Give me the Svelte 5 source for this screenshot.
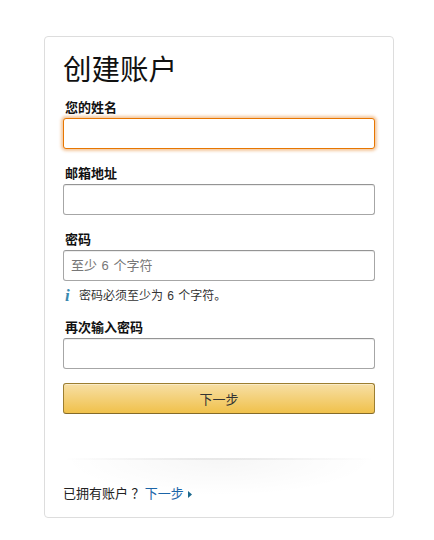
<script>
  let fields = [
    { id: 'name', label: '您的姓名', focus: true },
    { id: 'email', label: '邮箱地址' },
    { id: 'pw', label: '密码', placeholder: '至少 6 个字符', hint: '密码必须至少为 6 个字符。' },
    { id: 'pw2', label: '再次输入密码' }
  ];
</script>

<main class="page">
  <section class="card">
    <h1>创建账户</h1>
    <form>
      {#each fields as f}
        <div class="field" class:has-hint={f.hint}>
          <label for={f.id}>{f.label}</label>
          <input id={f.id} class:focus={f.focus} type="text" placeholder={f.placeholder ?? ''} />
          {#if f.hint}
            <p class="hint"><i>i</i><span>{f.hint}</span></p>
          {/if}
        </div>
      {/each}
      <button type="button">下一步</button>
    </form>
    <div class="foot">
      已拥有账户 ？<a href="#signin">下一步<svg width="4" height="7" viewBox="0 0 4 7"><path d="M0 0l4 3.5L0 7z" fill="#1d6a8e" /></svg></a>
    </div>
  </section>
</main>

<style>
  :global(body) {
    margin: 0;
    background: #fff;
    font-family: "Liberation Sans", "Noto Sans CJK SC", sans-serif;
    color: #111;
  }
  .page {
    padding: 36px 40px 22px 44px;
  }
  .card {
    box-sizing: border-box;
    width: 350px;
    height: 482px;
    border: 1px solid #ddd;
    border-radius: 4px;
    padding: 14px 18px 0;
    display: flex;
    flex-direction: column;
  }
  h1 {
    margin: 0 0 9px;
    font-size: 28.5px;
    font-weight: 400;
    line-height: 38px;
  }
  form {
    display: flex;
    flex-direction: column;
  }
  .field {
    margin-bottom: 15px;
  }
  .field.has-hint {
    margin-bottom: 13px;
  }
  .field:last-of-type {
    margin-bottom: 14px;
  }
  label {
    display: block;
    padding-left: 2px;
    font-size: 13px;
    font-weight: 700;
    line-height: 19px;
    margin-bottom: 1px;
  }
  input {
    display: block;
    box-sizing: border-box;
    width: 312px;
    height: 31px;
    padding: 0 7px;
    border: 1px solid #a6a6a6;
    border-top-color: #949494;
    border-radius: 3px;
    box-shadow: inset 0 1px 0 rgba(0, 0, 0, 0.07);
    font: inherit;
    font-size: 13px;
    word-spacing: 1px;
    outline: none;
  }
  input.focus {
    border-color: #e77600;
    box-shadow: 0 0 3px 2px rgba(228, 121, 17, 0.4);
  }
  input::placeholder {
    color: #777;
  }
  .hint {
    display: flex;
    align-items: center;
    margin: 6px 0 0;
    font-size: 12px;
    line-height: 18px;
    word-spacing: 1px;
    color: #333;
  }
  .hint i {
    width: 16px;
    padding-left: 2px;
    box-sizing: border-box;
    font-family: "Liberation Serif", serif;
    font-size: 17px;
    font-weight: 700;
    color: #3b8ab0;
  }
  button {
    height: 31px;
    width: 312px;
    border: 1px solid #9c7e31;
    border-bottom-color: #846a29;
    border-radius: 3px;
    background: linear-gradient(to bottom, #f7dfa5, #f0c14b);
    box-shadow: inset 0 1px 0 rgba(255, 255, 255, 0.4);
    font: inherit;
    font-size: 13px;
    color: #333;
    padding: 0;
  }
  .foot {
    margin-top: 44px;
    height: 59px;
    padding-top: 27px;
    box-sizing: border-box;
    font-size: 13px;
    line-height: 18px;
    color: #222;
    background:
      linear-gradient(to right, rgba(0, 0, 0, 0), rgba(0, 0, 0, 0.06) 40%, rgba(0, 0, 0, 0.06) 60%, rgba(0, 0, 0, 0)) top / 100% 2px no-repeat,
      radial-gradient(ellipse 50% 38px at 50% 0, rgba(0, 0, 0, 0.035), rgba(0, 0, 0, 0) 100%);
  }
  .foot a {
    color: #1b65a8;
    text-decoration: none;
  }
  .foot svg {
    margin-left: 4px;
  }
</style>
